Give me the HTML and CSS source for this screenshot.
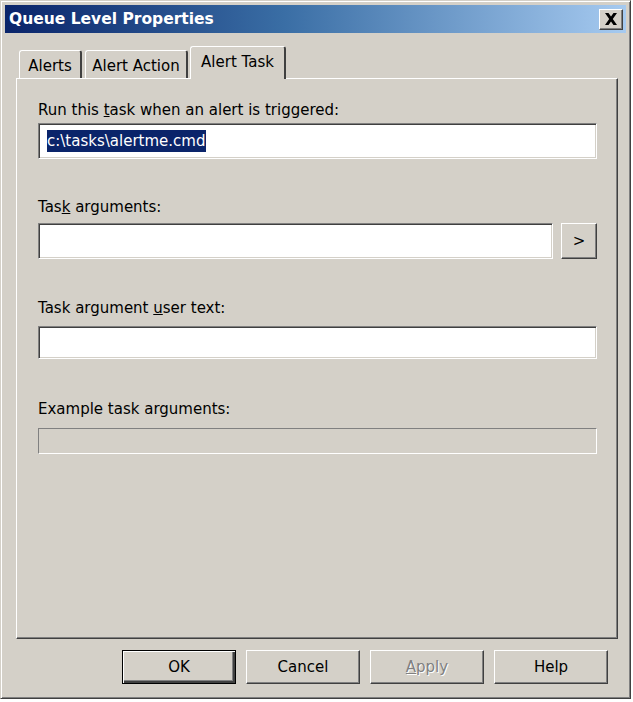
FILE: index.html
```html
<!DOCTYPE html>
<html lang="en">
<head>
    <meta charset="UTF-8">
    <title>Queue Level Properties</title>
    <link rel="stylesheet" href="styles.css">
</head>
<body>

    <div class="window">
        <div class="titlebar">
            <span class="title">Queue Level Properties</span>
            <button class="close">
                <svg width="14" height="12" viewBox="0 0 14 12"><path d="M1 0h3.5L7 3.6 9.5 0H13L8.8 6 13 12H9.5L7 8.4 4.5 12H1l4.2-6z" fill="#000"/></svg>
            </button>
        </div>

        <div class="tabs">
            <div class="tab tab-alerts">Alerts</div>
            <div class="tab tab-action">Alert Action</div>
            <div class="tab tab-task active">Alert Task</div>
        </div>

        <div class="panel">
            <div class="field first">
                <label>Run this <u>t</u>ask when an alert is triggered:</label>
                <div class="input tall"><span class="selected">c:\tasks\alertme.cmd</span></div>
            </div>

            <div class="field">
                <label>Tas<u>k</u> arguments:</label>
                <div class="row">
                    <div class="input tall grow"></div>
                    <button class="btn more">&gt;</button>
                </div>
            </div>

            <div class="field">
                <label>Task argument <u>u</u>ser text:</label>
                <div class="input mid"></div>
            </div>

            <div class="field">
                <label>Example task arguments:</label>
                <div class="input disabled"></div>
            </div>
        </div>

        <div class="actions">
            <button class="btn default">OK</button>
            <button class="btn">Cancel</button>
            <button class="btn" disabled><span class="grey"><u>A</u>pply</span></button>
            <button class="btn">Help</button>
        </div>
    </div>

</body>
</html>
```

FILE: styles.css
```css
body {
    margin: 0;
    background-color: #fff;
    font-family: "DejaVu Sans", Verdana, sans-serif;
    font-size: 15px;
    color: #000;
}
.window {
    width: 631px;
    height: 699px;
    box-sizing: border-box;
    background-color: #d4d0c8;
    border: 1px solid;
    border-color: #d4d0c8 #404040 #404040 #d4d0c8;
    box-shadow: inset 1px 1px #fff, inset -1px -1px #808080;
    padding: 4px;
    display: flex;
    flex-direction: column;
}
.titlebar {
    height: 28px;
    display: flex;
    align-items: center;
    justify-content: space-between;
    padding: 0 3px 0 4px;
    background: linear-gradient(to right, #0a246a, #3a6ea5 45%, #a6caf0);
    color: #fff;
    font-weight: bold;
    font-size: 15.5px;
}
.close {
    width: 24px;
    height: 21px;
    padding: 0;
    display: flex;
    align-items: center;
    justify-content: center;
    background-color: #d4d0c8;
    border: 1px solid;
    border-color: #fff #404040 #404040 #fff;
    box-shadow: inset -1px -1px #808080;
}
.tabs {
    display: flex;
    align-items: flex-end;
    height: 32px;
    margin: 13px 0 0 11px;
    padding-left: 3px;
}
.tab {
    height: 28px;
    box-sizing: border-box;
    display: flex;
    align-items: center;
    justify-content: center;
    border: 1px solid;
    border-bottom: none;
    border-color: #fff #404040 #fff #fff;
    border-right-width: 2px;
    border-radius: 3px 3px 0 0;
    padding-top: 3px;
}
.tab-alerts {
    width: 63px;
}
.tab-action {
    width: 103px;
    margin-left: 3px;
}
.tab.active {
    width: 96px;
    height: 33px;
    margin-left: 2px;
    margin-bottom: -1px;
    background-color: #d4d0c8;
    padding-top: 0;
    padding-bottom: 2px;
    position: relative;
}
.panel {
    height: 561px;
    box-sizing: border-box;
    margin: 0 8px 0 11px;
    border: 1px solid;
    border-color: #fff #404040 #404040 #fff;
    box-shadow: inset -1px -1px #808080;
    padding: 0 20px 0 21px;
}
.field label {
    display: block;
    height: 20px;
    line-height: 20px;
}
.field.first {
    margin-top: 21px;
}
.field.first label {
    margin-bottom: 3px;
}
.field:nth-child(2) {
    margin-top: 38px;
}
.field:nth-child(2) label {
    margin-bottom: 6px;
}
.field:nth-child(3) {
    margin-top: 39px;
}
.field:nth-child(3) label {
    margin-bottom: 8px;
}
.field:nth-child(4) {
    margin-top: 40px;
}
.field:nth-child(4) label {
    margin-bottom: 9px;
}
.input {
    box-sizing: border-box;
    background-color: #fff;
    border: 1px solid;
    border-color: #808080 #fff #fff #808080;
    box-shadow: inset 1px 1px #404040, inset -1px -1px #d4d0c8;
    display: flex;
    align-items: center;
    padding-left: 8px;
}
.input.tall {
    height: 36px;
}
.input.mid {
    height: 33px;
}
.input.disabled {
    height: 26px;
    background-color: #d4d0c8;
    box-shadow: none;
}
.selected {
    background-color: #0a246a;
    color: #fff;
    line-height: 22px;
    padding-right: 1px;
}
.row {
    display: flex;
    gap: 8px;
}
.grow {
    flex: 1;
}
.btn {
    font-family: "DejaVu Sans", Verdana, sans-serif;
    font-size: 15px;
    color: #000;
    background-color: #d4d0c8;
    border: 1px solid;
    border-color: #fff #404040 #404040 #fff;
    box-shadow: inset -1px -1px #808080;
    padding: 0;
    box-sizing: border-box;
}
.btn.more {
    width: 36px;
    height: 36px;
}
.actions {
    display: flex;
    justify-content: flex-end;
    gap: 10px;
    margin-top: 11px;
    padding-right: 18px;
}
.actions .btn {
    width: 114px;
    height: 34px;
}
.actions .btn.default {
    border: 1px solid #000;
    box-shadow: inset 1px 1px #fff, inset -2px -2px #404040, inset -3px -3px #808080;
}
.grey {
    color: #808080;
    text-shadow: 1px 1px #fff;
}
```
